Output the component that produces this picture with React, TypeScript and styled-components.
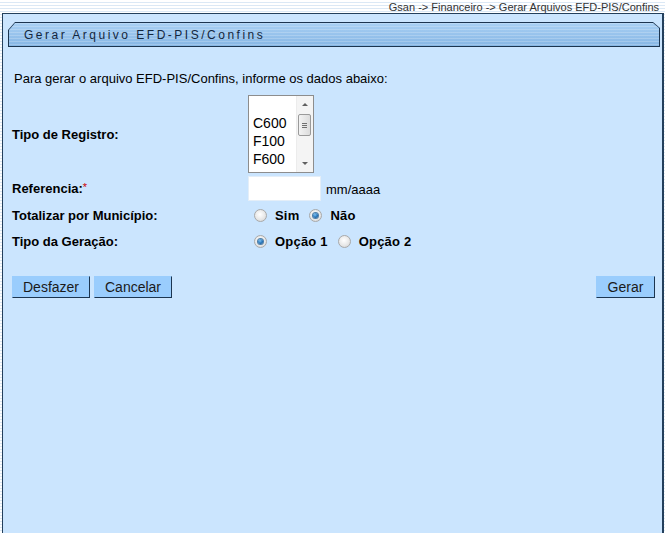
import React from 'react';
import styled, { createGlobalStyle } from 'styled-components';

const GlobalStyle = createGlobalStyle`
  html, body {
    margin: 0;
    padding: 0;
  }
  body {
    font-family: "Liberation Sans", Arial, sans-serif;
    background: repeating-linear-gradient(
      to bottom,
      #ffffff 0px,
      #ffffff 2px,
      #dbe8f5 2px,
      #dbe8f5 3px
    );
    min-height: 533px;
    overflow: hidden;
  }
`;

const Page = styled.div`
  width: 665px;
  height: 533px;
  overflow: hidden;
  display: flex;
  flex-direction: column;
`;

const Breadcrumb = styled.div`
  height: 13px;
  padding-right: 6px;
  text-align: right;
  font-size: 11px;
  line-height: 14px;
  color: #333;
`;

const Panel = styled.div`
  flex: 1;
  margin-left: 2px;
  width: 659px;
  background: #cbe5fe;
  border: 1px solid #24405c;
  border-right-width: 2px;
  border-bottom: none;
  display: flex;
  flex-direction: column;
`;

const HeaderFrame = styled.div`
  margin: 8px 2px 0 5px;
  height: 25px;
  background: #1c3550;
  clip-path: polygon(7px 0, calc(100% - 7px) 0, 100% 6px, 100% 100%, 0 100%, 0 8px);
  padding: 1px;
  box-sizing: border-box;
`;

const HeaderBar = styled.div`
  height: 100%;
  clip-path: polygon(6px 0, calc(100% - 6px) 0, 100% 5px, 100% 100%, 0 100%, 0 7px);
  background:
    repeating-linear-gradient(
      to bottom,
      rgba(255, 255, 255, 0.2) 0px,
      rgba(255, 255, 255, 0.2) 1px,
      rgba(0, 0, 0, 0) 1px,
      rgba(0, 0, 0, 0) 3px
    ),
    linear-gradient(to bottom, #a9d0f4, #86b6e4);
  display: flex;
  align-items: center;
  padding-left: 15px;
`;

const Title = styled.span`
  font-family: "Liberation Sans", Arial, sans-serif;
  font-size: 12px;
  letter-spacing: 2.5px;
  color: #13263d;
`;

const Content = styled.div`
  padding: 24px 7px 0 9px;
  display: flex;
  flex-direction: column;
`;

const Intro = styled.p`
  margin: 0 0 9px 2px;
  font-size: 13px;
  line-height: 15px;
  color: #000;
`;

const FormRow = styled.div<{ $height: number; $gap?: number }>`
  display: grid;
  grid-template-columns: 236px 1fr;
  align-items: center;
  height: ${(p) => p.$height}px;
  margin-top: ${(p) => p.$gap ?? 0}px;
`;

const Label = styled.div`
  font-size: 13px;
  font-weight: bold;
  color: #000;
`;

const Required = styled.span`
  color: #cc0000;
  font-weight: normal;
  vertical-align: top;
  font-size: 11px;
`;

const Control = styled.div`
  display: flex;
  align-items: center;
`;

const ListBox = styled.div`
  width: 66px;
  height: 78px;
  box-sizing: border-box;
  border: 1px solid #8d8d8d;
  background: #fff;
  display: flex;
`;

const Options = styled.div`
  flex: 1;
  display: flex;
  flex-direction: column;
  padding-left: 4px;
`;

const Option = styled.div`
  height: 18px;
  line-height: 19px;
  font-size: 14px;
  color: #000;
`;

const ScrollBar = styled.div`
  width: 16px;
  background: #f4f4f4;
  border-left: 1px solid #ececec;
  display: flex;
  flex-direction: column;
  align-items: center;
  position: relative;
`;

const Arrow = styled.div<{ $down?: boolean }>`
  width: 0;
  height: 0;
  border-left: 3px solid transparent;
  border-right: 3px solid transparent;
  ${(p) => (p.$down ? 'border-top: 3px solid #606060;' : 'border-bottom: 3px solid #606060;')}
  margin-top: ${(p) => (p.$down ? 'auto' : '7px')};
  margin-bottom: ${(p) => (p.$down ? '7px' : '0')};
`;

const Thumb = styled.div`
  position: absolute;
  top: 18px;
  left: 1px;
  width: 13px;
  height: 22px;
  box-sizing: border-box;
  border: 1px solid #9a9a9a;
  border-radius: 2px;
  background: linear-gradient(to right, #f3f3f3, #dcdcdc);
  display: flex;
  flex-direction: column;
  justify-content: center;
  align-items: center;
  gap: 1px;
`;

const Grip = styled.div`
  width: 5px;
  height: 1px;
  background: #707070;
`;

const TextInput = styled.input`
  width: 73px;
  height: 25px;
  box-sizing: border-box;
  border: 1px solid #e4eef8;
  background: #fff;
  outline: none;
  padding: 0 3px;
  font-family: "Liberation Sans", Arial, sans-serif;
  font-size: 13px;
`;

const Hint = styled.span`
  margin-left: 5px;
  font-size: 13px;
  color: #000;
  padding-top: 2px;
`;

const RadioGroup = styled.label<{ $first?: boolean }>`
  display: flex;
  align-items: center;
  margin-left: ${(p) => (p.$first ? 6 : 0)}px;
  margin-right: 10px;
`;

const Radio = styled.span<{ $checked?: boolean }>`
  width: 13px;
  height: 13px;
  box-sizing: border-box;
  border-radius: 50%;
  border: 1px solid #a9a9a9;
  background: radial-gradient(circle at 45% 40%, #ffffff 0%, #e8e8e8 55%, #cfcfcf 100%);
  display: flex;
  align-items: center;
  justify-content: center;
  &::after {
    content: '';
    display: ${(p) => (p.$checked ? 'block' : 'none')};
    width: 5px;
    height: 5px;
    border-radius: 50%;
    background: radial-gradient(circle at 40% 35%, #7fc2f2 0%, #1f6db3 60%, #0d3f73 100%);
    box-shadow: 0 0 0 1px #4f7fa8;
  }
`;

const RadioText = styled.span`
  margin-left: 8px;
  font-size: 13px;
  font-weight: bold;
  letter-spacing: 0.2px;
  color: #000;
`;

const Buttons = styled.div`
  margin-top: 22px;
  display: flex;
  gap: 4px;
`;

const Spacer = styled.div`
  flex: 1;
`;

const Button = styled.button<{ $width: number }>`
  width: ${(p) => p.$width}px;
  height: 22px;
  box-sizing: border-box;
  background: #9acdfd;
  border: 1px solid #9acdfd;
  border-right-color: #1c3550;
  border-bottom-color: #1c3550;
  font-family: "Liberation Sans", Arial, sans-serif;
  font-size: 14px;
  color: #1a1a1a;
  padding: 0;
  cursor: pointer;
`;

const App: React.FC = () => {
  return (
    <Page>
      <GlobalStyle />
      <Breadcrumb>Gsan -&gt; Financeiro -&gt; Gerar Arquivos EFD-PIS/Confins</Breadcrumb>
      <Panel>
        <HeaderFrame>
          <HeaderBar>
            <Title>Gerar Arquivo EFD-PIS/Confins</Title>
          </HeaderBar>
        </HeaderFrame>
        <Content>
          <Intro>Para gerar o arquivo EFD-PIS/Confins, informe os dados abaixo:</Intro>

          <FormRow $height={78}>
            <Label>Tipo de Registro:</Label>
            <Control>
              <ListBox>
                <Options>
                  <Option>&nbsp;</Option>
                  <Option>C600</Option>
                  <Option>F100</Option>
                  <Option>F600</Option>
                </Options>
                <ScrollBar>
                  <Arrow />
                  <Thumb>
                    <Grip />
                    <Grip />
                    <Grip />
                  </Thumb>
                  <Arrow $down />
                </ScrollBar>
              </ListBox>
            </Control>
          </FormRow>

          <FormRow $height={25} $gap={3}>
            <Label>
              Referencia:<Required>*</Required>
            </Label>
            <Control>
              <TextInput type="text" />
              <Hint>mm/aaaa</Hint>
            </Control>
          </FormRow>

          <FormRow $height={26} $gap={1}>
            <Label>Totalizar por Município:</Label>
            <Control>
              <RadioGroup $first>
                <Radio />
                <RadioText>Sim</RadioText>
              </RadioGroup>
              <RadioGroup>
                <Radio $checked />
                <RadioText>Não</RadioText>
              </RadioGroup>
            </Control>
          </FormRow>

          <FormRow $height={26}>
            <Label>Tipo da Geração:</Label>
            <Control>
              <RadioGroup $first>
                <Radio $checked />
                <RadioText>Opção 1</RadioText>
              </RadioGroup>
              <RadioGroup>
                <Radio />
                <RadioText>Opção 2</RadioText>
              </RadioGroup>
            </Control>
          </FormRow>

          <Buttons>
            <Button $width={78}>Desfazer</Button>
            <Button $width={78}>Cancelar</Button>
            <Spacer />
            <Button $width={59}>Gerar</Button>
          </Buttons>
        </Content>
      </Panel>
    </Page>
  );
};

export default App;
